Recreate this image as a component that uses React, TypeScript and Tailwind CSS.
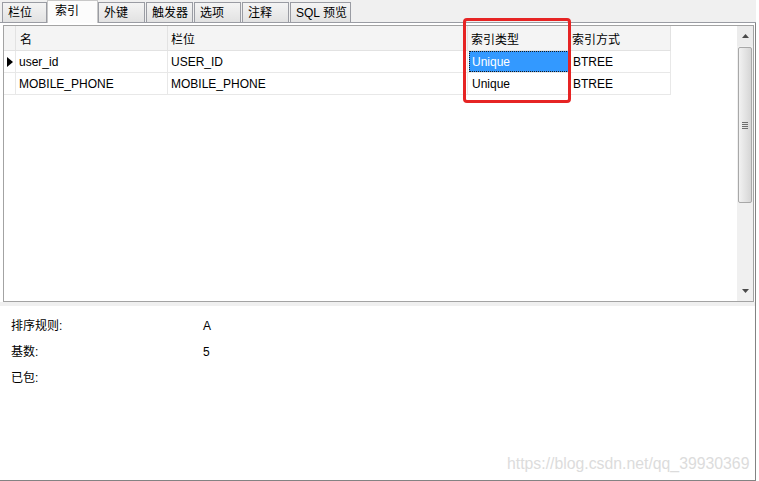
import React from "react";

const F = "font-['Liberation_Sans','Noto_Sans_CJK_SC',sans-serif]";

function Tab({ label, w, ml = "" }: { label: string; w: string; ml?: string }) {
  return (
    <div
      className={`${w} ${ml} h-[20px] flex items-center pl-[5px] border border-b-0 border-[#9a9ca3] bg-gradient-to-b from-[#f4f4f4] to-[#e2e2e2] text-[12px] text-black leading-none`}
    >
      {label}
    </div>
  );
}

function ScrollUp() {
  return (
    <svg width="7" height="4" viewBox="0 0 7 4">
      <polygon points="3.5,0 7,4 0,4" fill="#4a4a4a" />
    </svg>
  );
}
function ScrollDown() {
  return (
    <svg width="7" height="4" viewBox="0 0 7 4">
      <polygon points="0,0 7,0 3.5,4" fill="#4a4a4a" />
    </svg>
  );
}

export default function App() {
  return (
    <div className={`relative w-[759px] h-[481px] bg-white overflow-hidden ${F}`}>
      {/* Tab strip */}
      <div className="flex items-end h-[23px] w-[756px] border-b border-[#9a9ca3] bg-[#f0f0f0] pl-[2px]">
        <Tab label="栏位" w="w-[45px]" />
        <div className="relative z-10 w-[51px] h-[23px] -mb-px flex items-center pl-[7px] pb-[2px] bg-[#fcfcfc] border border-b-0 border-[#c8c8c8] text-[12px] text-black leading-none">
          索引
        </div>
        <Tab label="外键" w="w-[47px]" />
        <Tab label="触发器" w="w-[47px]" ml="ml-[1px]" />
        <Tab label="选项" w="w-[47px]" ml="ml-[1px]" />
        <Tab label="注释" w="w-[47px]" ml="ml-[1px]" />
        <Tab label="SQL 预览" w="w-[61px]" ml="ml-[1px]" />
      </div>

      {/* Main panel */}
      <div className="flex flex-col w-[756px] h-[458px] border-r border-b border-[#838383]">
        {/* Grid */}
        <div className="ml-[3px] mt-[2px] w-[751px] h-[277px] border border-[#a3a3a3] flex">
          <div className="flex-1 flex flex-col text-[12px] text-black leading-none">
            {/* header */}
            <div className="flex h-[25px]">
              <div className="flex w-[667px] h-full bg-[#f4f4f4] border-b border-[#e2e2e2]">
                <div className="w-[12px] h-full border-r border-[#e2e2e2]" />
                <div className="w-[152px] h-full border-r border-[#e2e2e2] flex items-center pl-[4px] pt-[3px]">名</div>
                <div className="w-[300px] h-full border-r border-[#e2e2e2] flex items-center pl-[3px] pt-[3px]">栏位</div>
                <div className="w-[102px] h-full border-r border-[#e2e2e2] flex items-center pl-[3px] pt-[3px]">索引类型</div>
                <div className="w-[101px] h-full border-r border-[#e2e2e2] flex items-center pl-[2px] pt-[3px]">索引方式</div>
              </div>
            </div>
            {/* row 1 */}
            <div className="flex w-[667px] h-[22px] border-b border-[#e8e8e8]">
              <div className="w-[12px] h-full border-r border-[#e8e8e8] flex items-center pl-[3px]">
                <svg width="6" height="10" viewBox="0 0 6 10">
                  <polygon points="0,0 6,5 0,10" fill="#000" />
                </svg>
              </div>
              <div className="w-[152px] h-full border-r border-[#e8e8e8] flex items-center pl-[3px]">user_id</div>
              <div className="w-[300px] h-full border-r border-[#e8e8e8] flex items-center pl-[3px]">USER_ID</div>
              <div className="w-[102px] h-full border-r border-[#e8e8e8] flex pl-[1px]">
                <div className="flex-1 h-full bg-[#3399ff] border border-dotted border-[#1a1a1a] flex items-center pl-[2px] text-white">
                  Unique
                </div>
              </div>
              <div className="w-[101px] h-full border-r border-[#e8e8e8] flex items-center pl-[3px]">BTREE</div>
            </div>
            {/* row 2 */}
            <div className="flex w-[667px] h-[22px] border-b border-[#e8e8e8]">
              <div className="w-[12px] h-full border-r border-[#e8e8e8]" />
              <div className="w-[152px] h-full border-r border-[#e8e8e8] flex items-center pl-[3px]">MOBILE_PHONE</div>
              <div className="w-[300px] h-full border-r border-[#e8e8e8] flex items-center pl-[3px]">MOBILE_PHONE</div>
              <div className="w-[102px] h-full border-r border-[#e8e8e8] flex items-center pl-[4px]">Unique</div>
              <div className="w-[101px] h-full border-r border-[#e8e8e8] flex items-center pl-[3px]">BTREE</div>
            </div>
          </div>

          {/* Scrollbar */}
          <div className="w-[16px] h-full flex flex-col bg-[#f0f0f0]">
            <div className="h-[20px] flex items-center justify-center bg-[#ececec]">
              <ScrollUp />
            </div>
            <div className="mt-[1px] h-[156px] mx-[1px] rounded-[2px] border border-[#a8a8a8] bg-gradient-to-r from-[#f2f2f2] via-[#e4e4e4] to-[#d6d6d6] flex items-center justify-center">
              <div className="flex flex-col gap-[1px]">
                <div className="w-[6px] h-px bg-[#6e6e6e]" />
                <div className="w-[6px] h-px bg-[#6e6e6e]" />
                <div className="w-[6px] h-px bg-[#6e6e6e]" />
                <div className="w-[6px] h-px bg-[#6e6e6e]" />
              </div>
            </div>
            <div className="flex-1" />
            <div className="h-[20px] flex items-center justify-center">
              <ScrollDown />
            </div>
          </div>
        </div>

        {/* splitter band */}
        <div className="h-[4px] w-full bg-[#f0f0f0]" />

        {/* Properties */}
        <div className="flex-1 pt-[7px] pl-[11px] text-[12px] text-black leading-none">
          <div className="flex h-[26px] items-center">
            <div className="w-[192px]">排序规则:</div>
            <div>A</div>
          </div>
          <div className="flex h-[26px] items-center">
            <div className="w-[192px]">基数:</div>
            <div>5</div>
          </div>
          <div className="flex h-[26px] items-center">
            <div className="w-[192px]">已包:</div>
            <div />
          </div>
        </div>
      </div>

      {/* Red highlight box */}
      <div className="absolute left-[463px] top-[18px] w-[108px] h-[85px] border-[3px] border-[#e62424] rounded-[4px] pointer-events-none" />

      {/* Watermark */}
      <div className="absolute left-[507px] top-[455px] text-[15.8px] leading-[18px] text-[#dcdcdc] font-['Liberation_Sans',sans-serif] whitespace-nowrap">
        https://blog.csdn.net/qq_39930369
      </div>
    </div>
  );
}
